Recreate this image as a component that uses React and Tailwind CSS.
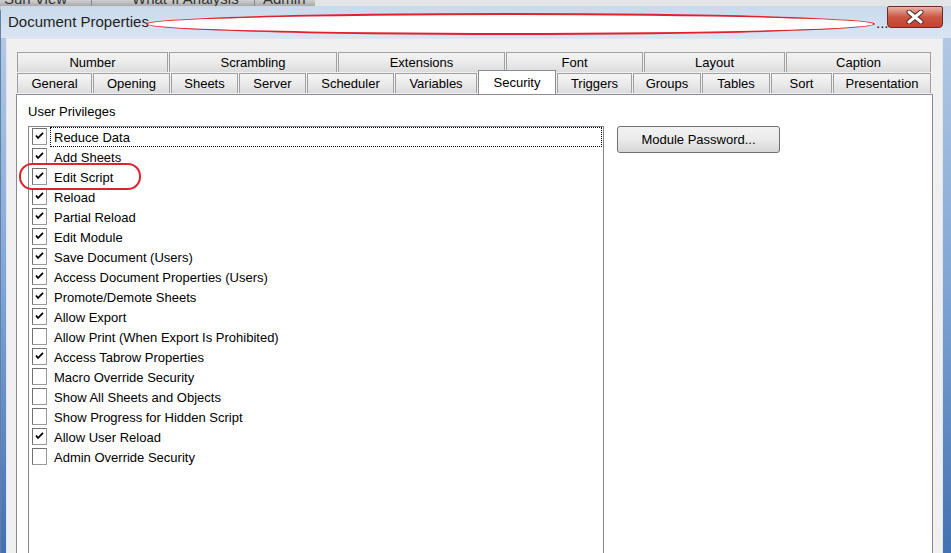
import React from "react";

const row1 = [
  ["Number", 151],
  ["Scrambling", 168],
  ["Extensions", 167],
  ["Font", 137],
  ["Layout", 141],
  ["Caption", 145],
];
const row2 = [
  ["General", 75],
  ["Opening", 77],
  ["Sheets", 67],
  ["Server", 67],
  ["Scheduler", 87],
  ["Variables", 82],
  ["Security", 78],
  ["Triggers", 75],
  ["Groups", 68],
  ["Tables", 68],
  ["Sort", 61],
  ["Presentation", 98],
];

const items = [
  ["Reduce Data", true],
  ["Add Sheets", true],
  ["Edit Script", true],
  ["Reload", true],
  ["Partial Reload", true],
  ["Edit Module", true],
  ["Save Document (Users)", true],
  ["Access Document Properties (Users)", true],
  ["Promote/Demote Sheets", true],
  ["Allow Export", true],
  ["Allow Print (When Export Is Prohibited)", false],
  ["Access Tabrow Properties", true],
  ["Macro Override Security", false],
  ["Show All Sheets and Objects", false],
  ["Show Progress for Hidden Script", false],
  ["Allow User Reload", true],
  ["Admin Override Security", false],
];

function Tab({ label, w, selected }) {
  if (selected) {
    return (
      <div
        style={{ width: w }}
        className="relative z-10 -mt-[3px] h-[24px] shrink-0 border border-b-0 border-[#898c95] bg-white flex items-start justify-center pt-[2px]"
      >
        {label}
      </div>
    );
  }
  return (
    <div
      style={{ width: w }}
      className="h-[20px] shrink-0 border border-b-0 border-[#a0a0a0] bg-gradient-to-b from-[#f4f4f4] via-[#ebebeb] to-[#dcdcdc] flex items-center justify-center"
    >
      {label}
    </div>
  );
}

function CheckBox({ checked }) {
  return (
    <div className="w-[15px] h-[17px] shrink-0 bg-white border border-[#9a9a9a] border-t-[#707070] border-l-[#707070] relative">
      {checked && (
        <svg className="absolute left-[2px] top-[3px]" width="9" height="8" viewBox="0 0 9 8">
          <path d="M1 3.5 L3 6 L8 0.8" stroke="#000" strokeWidth="1.8" fill="none" />
        </svg>
      )}
    </div>
  );
}

export default function App() {
  return (
    <div
      className="w-[951px] h-[553px] overflow-hidden relative flex flex-col bg-[#c9c9c9] text-[13px] text-black"
      style={{ fontFamily: '"Liberation Sans", Arial, sans-serif' }}
    >
      {/* background app tabs strip */}
      <div className="h-[6px] shrink-0 flex bg-gradient-to-b from-[#d0d0d0] to-[#a9a9a9] overflow-hidden text-[#333] text-[15px] leading-[15px]">
        <div className="w-[92px] border-r border-[#888] -mt-[9px] pl-[4px]">Sun View</div>
        <div className="w-[163px] border-r border-[#888] -mt-[9px] pl-[40px]">What If Analysis</div>
        <div className="w-[60px] -mt-[9px] pl-[8px]">Admin</div>
        <div className="flex-1 bg-[#e4e4e4]" />
      </div>

      {/* window */}
      <div className="flex-1 flex flex-col rounded-tl-[6px] bg-gradient-to-b from-[#b8cde6] via-[#7fa5d6] to-[#3f6fb0] border-l border-[#6080a8]">
        {/* title bar */}
        <div className="h-[32px] shrink-0 relative flex items-center pl-[7px] bg-gradient-to-b from-[#c9d9ec] to-[#d9e5f2] text-[15px]">
          <span className="text-[#1e1e1e]">Document Properties</span>
          <div className="absolute left-[145px] top-[7px] w-[729px] h-[22px] rounded-[50%] border-2 border-[#e0222c] bg-white" />
          <span className="absolute left-[875px] top-[6px] text-[#1e1e1e]">...</span>
          <div className="absolute left-[886px] top-0 w-[56px] h-[22px] rounded-b-[4px] rounded-t-[2px] border border-[#6b2b26] bg-gradient-to-b from-[#e8b2a6] via-[#c95643] to-[#c8402c] flex items-center justify-center">
            <svg width="18" height="14" viewBox="0 0 18 14">
              <path d="M3 2 L15 12 M15 2 L3 12" stroke="#4a2a2a" strokeWidth="5" strokeLinecap="round" />
              <path d="M3 2 L15 12 M15 2 L3 12" stroke="#ffffff" strokeWidth="3" strokeLinecap="round" />
            </svg>
          </div>
        </div>

        {/* client area row */}
        <div className="flex-1 flex pl-[5px] pr-[8px]">
          <div className="flex-1 bg-[#f0f0f0] border-t border-l border-r border-[#dfe6ee] flex flex-col pl-[9px] pt-[13px] pr-[9px]">
            {/* tab rows */}
            <div className="flex flex-col pl-[1px]">
              <div className="flex gap-[1px]">
                {row1.map(([l, w]) => (
                  <Tab key={l} label={l} w={w} />
                ))}
              </div>
              <div className="flex gap-[1px] mt-[1px]">
                {row2.map(([l, w]) => (
                  <Tab key={l} label={l} w={w} selected={l === "Security"} />
                ))}
              </div>
            </div>
            {/* panel */}
            <div className="flex-1 bg-white border border-[#898c95] pl-[11px] flex flex-col">
              <div className="h-[31px] pt-[2px] flex items-center">User Privileges</div>
              <div className="flex items-start gap-[13px]">
                <div className="w-[576px] h-[440px] border border-[#828790] pt-[1px] pl-[3px] pr-[1px]">
                  {items.map(([label, checked], i) => (
                    <div key={label} className="h-[20px] flex items-start">
                      <CheckBox checked={checked} />
                      <div
                        className={
                          "ml-[3px] flex-1 h-[20px] -mt-[1px] flex items-center pl-[3px] pt-[1px] border border-dotted " +
                          (i === 0 ? "border-[#000]" : "border-transparent")
                        }
                      >
                        {label}
                      </div>
                    </div>
                  ))}
                </div>
                <div className="w-[163px] h-[27px] rounded-[3px] border border-[#707070] bg-gradient-to-b from-[#f2f2f2] via-[#ebebeb] to-[#d6d6d6] flex items-center justify-center">
                  Module Password...
                </div>
              </div>
            </div>
          </div>
        </div>
      </div>

      {/* red highlight around Edit Script */}
      <div className="absolute left-[19px] top-[163px] w-[122px] h-[27px] rounded-[13px] border-2 border-[#e0222c]" />
    </div>
  );
}
